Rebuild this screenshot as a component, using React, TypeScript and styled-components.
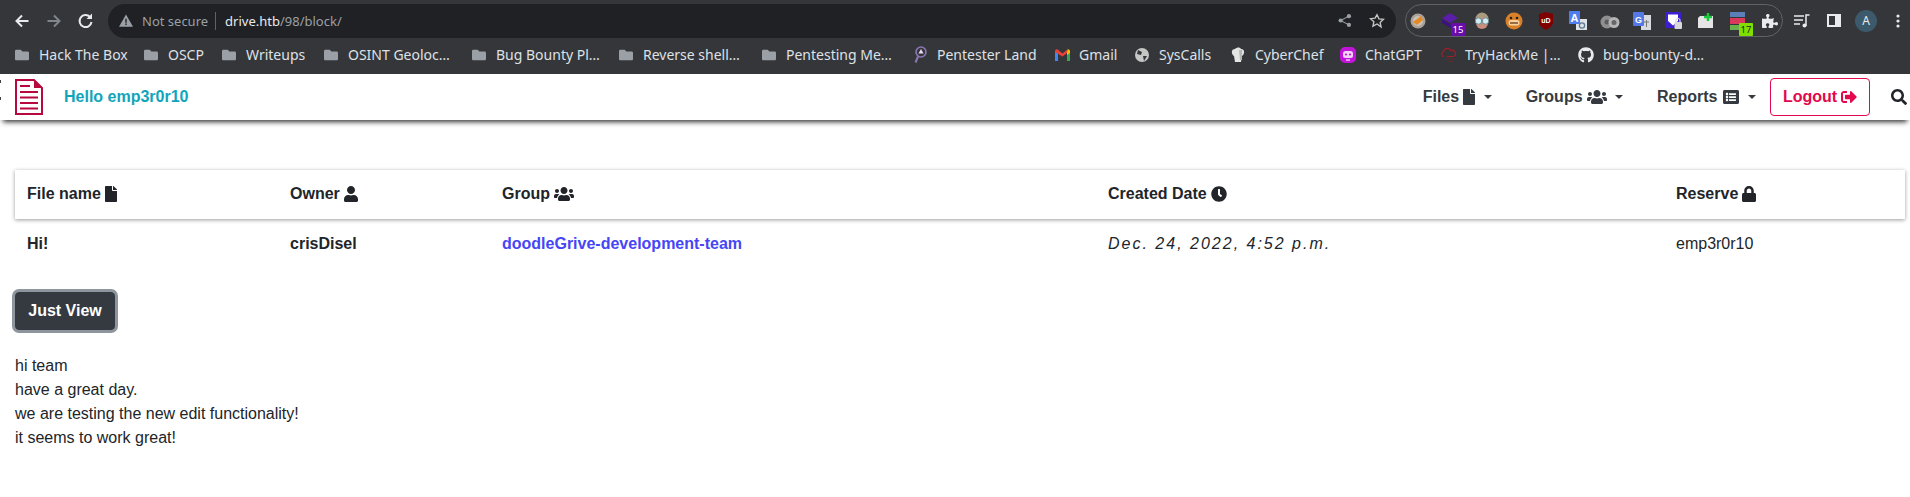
import React from "react";
import styled, { createGlobalStyle } from "styled-components";
import {
  FaFile,
  FaUsers,
  FaUser,
  FaClock,
  FaLock,
  FaListAlt,
  FaSignOutAlt,
  FaSearch,
  FaGithub,
  FaPuzzlePiece,
  FaFolder,
} from "react-icons/fa";

const GlobalStyle = createGlobalStyle`
  html, body {
    margin: 0;
    background: #fff;
    font-family: "Liberation Sans", Arial, sans-serif;
    color: #212529;
    font-size: 16px;
    overflow: hidden;
  }
`;

const Chrome = styled.div`
  background: #35363a;
  height: 74px;
  display: flex;
  flex-direction: column;
  font-family: "Noto Sans", sans-serif;
`;

const Toolbar = styled.div`
  height: 41px;
  display: flex;
  align-items: center;
  padding-left: 12px;
`;

const NavGlyph = styled.svg`
  width: 20px;
  height: 20px;
  margin-right: 12px;
  flex: none;
`;

const Omnibox = styled.div`
  width: 1288px;
  height: 34px;
  border-radius: 17px;
  background: #202124;
  display: flex;
  align-items: center;
  padding-left: 11px;
  box-sizing: border-box;
  flex: none;
`;

const Secure = styled.span`
  color: #9aa0a6;
  font-size: 13px;
  margin-left: 9px;
  padding-right: 7px;
  border-right: 1px solid #5f6368;
  line-height: 18px;
`;

const Host = styled.span`
  color: #e8eaed;
  margin-left: 9px;
  font-size: 13px;
`;

const Path = styled.span`
  color: #9aa0a6;
  font-size: 13px;
`;

const OmniActions = styled.div`
  margin-left: auto;
  display: flex;
  gap: 17px;
  align-items: center;
  padding-right: 11px;
`;

const Extensions = styled.div`
  margin-left: 9px;
  width: 378px;
  height: 33px;
  box-sizing: border-box;
  border: 1px solid #5f6368;
  border-radius: 17px;
  display: flex;
  align-items: center;
  flex: none;
`;

const ExtSlot = styled.div`
  width: 24px;
  height: 24px;
  display: flex;
  align-items: center;
  justify-content: center;
  position: relative;
  flex: none;
  margin-right: 8px;

  &:last-child {
    margin-right: 0;
  }
`;

const Badge = styled.span<{ $bg: string; $fg: string }>`
  position: absolute;
  right: -3px;
  bottom: -3px;
  width: 14px;
  height: 13px;
  background: ${({ $bg }) => $bg};
  color: ${({ $fg }) => $fg};
  border-radius: 1px;
  font-size: 9.5px;
  line-height: 13px;
  text-align: center;
`;

const RightTools = styled.div`
  display: flex;
  align-items: center;
  margin-left: 11px;
`;

const SideGlyph = styled.svg`
  margin-left: 17px;
`;

const Avatar = styled.div`
  width: 22px;
  height: 22px;
  border-radius: 50%;
  background: #3c5a6b;
  color: #e8eaed;
  font-size: 12px;
  line-height: 22px;
  text-align: center;
  margin-left: 14px;
`;

const DotsGlyph = styled.svg`
  margin-left: 19px;
`;

const Bookmarks = styled.div`
  height: 27px;
  display: flex;
  align-items: center;
  padding-left: 14px;
  color: #dee1e6;
  font-size: 14px;
`;

const Bookmark = styled.div<{ $w: number }>`
  width: ${({ $w }) => $w}px;
  display: flex;
  align-items: center;
  gap: 9px;
  white-space: nowrap;
  flex: none;
`;

const BookmarkIcon = styled.span`
  width: 16px;
  display: flex;
  justify-content: center;
  align-items: center;
  flex: none;
`;

const Nav = styled.nav`
  height: 46px;
  background: #fff;
  box-shadow: 0 5px 5px -3px rgba(0, 0, 0, 0.8);
  display: flex;
  align-items: center;
  position: relative;
  padding-left: 15px;
  font-weight: 700;
`;

const EdgeMarks = styled.span`
  position: absolute;
  left: 0;
  top: 6px;
  width: 1px;
  height: 3px;
  background: #444;
  box-shadow: 0 17px 0 #444;
`;

const Logo = styled.svg`
  flex: none;
`;

const Brand = styled.a`
  color: #11a5bb;
  margin-left: 21px;
`;

const NavRight = styled.div`
  margin-left: auto;
  display: flex;
  align-items: center;
`;

const NavItem = styled.a`
  display: flex;
  align-items: center;
  color: #343a40;
  gap: 4px;
  margin-right: 34px;
`;

const Caret = styled.span`
  width: 0;
  height: 0;
  margin-left: 4.5px;
  border-top: 4.8px solid #343a40;
  border-left: 4.8px solid transparent;
  border-right: 4.8px solid transparent;
`;

const Logout = styled.a`
  display: flex;
  align-items: center;
  gap: 4px;
  color: #e3074d;
  border: 1px solid #e3074d;
  border-radius: 4px;
  height: 38px;
  width: 100px;
  box-sizing: border-box;
  justify-content: center;
  margin-left: -20px;
`;

const SearchWrap = styled.span`
  display: flex;
  margin-left: 21px;
  margin-right: 3px;
  color: #212529;
`;

const FileIcon = styled(FaFile)`
  width: 12px;
  height: 16px;
`;

const UsersIcon = styled(FaUsers)`
  width: 20px;
  height: 16px;
`;

const UserIcon = styled(FaUser)`
  width: 14px;
  height: 16px;
`;

const ClockIcon = styled(FaClock)`
  width: 16px;
  height: 16px;
`;

const LockIcon = styled(FaLock)`
  width: 14px;
  height: 16px;
`;

const ReportIcon = styled(FaListAlt)`
  width: 18px;
  height: 16px;
`;

const LogoutIcon = styled(FaSignOutAlt)`
  width: 16px;
  height: 16px;
`;

const Main = styled.main`
  padding: 50px 5px 0 15px;
`;

const Row = styled.div`
  display: grid;
  grid-template-columns: 263px 212px 606px 568px 1fr;
`;

const HeadRow = styled(Row)`
  height: 49px;
  box-sizing: border-box;
  padding-bottom: 2px;
  align-items: center;
  box-shadow: 0 1px 4px rgba(0, 0, 0, 0.4);
`;

const BodyRow = styled(Row)`
  height: 50px;
  align-items: center;
`;

const Cell = styled.div<{ $bold?: boolean; $italic?: boolean }>`
  padding-left: 12px;
  display: flex;
  align-items: center;
  gap: 4px;
  font-weight: ${({ $bold }) => ($bold ? 700 : 400)};
  ${({ $italic }) => $italic && "font-style: italic; letter-spacing: 2px;"}
`;

const GroupLink = styled.a`
  color: #4646f5;
  font-weight: 700;
`;

const ViewButton = styled.button`
  display: block;
  margin-top: 23px;
  height: 38px;
  width: 100px;
  background: #343a40;
  color: #fff;
  border: 1px solid #343a40;
  border-radius: 4px;
  font: 700 16px "Liberation Sans", Arial, sans-serif;
  box-shadow: 0 0 0 3px rgba(130, 138, 145, 0.9);
`;

const Message = styled.div`
  margin-top: 24px;
  line-height: 24px;
`;

const Folder = () => <FaFolder size={14} color="#9aa0a6" />;

const bookmarks: { name: string; w: number; icon: React.ReactNode }[] = [
  { name: "Hack The Box", w: 129, icon: <Folder /> },
  { name: "OSCP", w: 78, icon: <Folder /> },
  { name: "Writeups", w: 102, icon: <Folder /> },
  { name: "OSINT Geoloc…", w: 148, icon: <Folder /> },
  { name: "Bug Bounty Pl…", w: 147, icon: <Folder /> },
  { name: "Reverse shell…", w: 143, icon: <Folder /> },
  { name: "Pentesting Me…", w: 151, icon: <Folder /> },
  {
    name: "Pentester Land",
    w: 142,
    icon: (
      <svg width="14" height="18" viewBox="0 0 14 18">
        <circle cx="8" cy="6" r="5" fill="#35363a" stroke="#8d78b5" strokeWidth="1.6" />
        <path d="M8 3 L10.5 7.5 H5.5z" fill="#ecdcf2" />
        <path d="M5 10.5 L2.5 16.5" stroke="#8d78b5" strokeWidth="2" />
      </svg>
    ),
  },
  {
    name: "Gmail",
    w: 80,
    icon: (
      <svg width="15" height="12" viewBox="0 0 15 12">
        <path d="M0 12V2L3 3v9z" fill="#4285f4" />
        <path d="M12 12V3l3-1v10z" fill="#34a853" />
        <path d="M0 1.5 L2 0 L7.5 4.5 L13 0 L12 4 L7.5 7.5 L0 3z" fill="#ea4335" />
        <path d="M12 3 L13 0 L15 1.5 V4 L12 6z" fill="#fbbc04" />
      </svg>
    ),
  },
  {
    name: "SysCalls",
    w: 96,
    icon: (
      <svg width="14" height="14" viewBox="0 0 14 14">
        <circle cx="7" cy="7" r="7" fill="#c4c7c5" />
        <path d="M3 2 L7 4 L6 7 L2 6z M8 8 L12 8 L9 13z" fill="#35363a" />
      </svg>
    ),
  },
  {
    name: "CyberChef",
    w: 110,
    icon: (
      <svg width="14" height="15" viewBox="0 0 14 15">
        <path d="M3 9 C0 7 0 2 4 2 C6 0 9 0 10 2 C14 2 14 7 11 9 L10 15 L4 15z" fill="#e4e4e4" />
        <path d="M8 3 H11 V13 H9z" fill="#b5b5b5" />
      </svg>
    ),
  },
  {
    name: "ChatGPT",
    w: 100,
    icon: (
      <svg width="16" height="16" viewBox="0 0 16 16">
        <rect width="16" height="16" rx="5" fill="#c015d8" />
        <rect x="3" y="4" width="10" height="7" rx="2.5" fill="#f3d2f8" />
        <circle cx="6" cy="7.5" r="1.1" fill="#c015d8" />
        <circle cx="10" cy="7.5" r="1.1" fill="#c015d8" />
        <path d="M6 13h4" stroke="#f3d2f8" strokeWidth="1.4" />
      </svg>
    ),
  },
  {
    name: "TryHackMe |…",
    w: 138,
    icon: (
      <svg width="16" height="16" viewBox="0 0 16 16">
        <path d="M3.5 10 A3 3 0 0 1 3.5 4.5 A4 4 0 0 1 11 3.5 A3 3 0 0 1 13.5 9.5 H7" fill="none" stroke="#a11d2a" strokeWidth="1.2" />
        <path d="M5 12 L13 12 M8 14.5 L13 14.5" stroke="#5e2a30" strokeWidth="1" />
      </svg>
    ),
  },
  { name: "bug-bounty-d…", w: 140, icon: <FaGithub size={16} color="#e8eaed" /> },
];

const App = () => (
  <>
    <GlobalStyle />
    <Chrome>
      <Toolbar>
        <NavGlyph viewBox="0 0 20 20">
          <path d="M16.5 10H5M10 4.5L4.5 10l5.5 5.5" fill="none" stroke="#e8eaed" strokeWidth="2" />
        </NavGlyph>
        <NavGlyph viewBox="0 0 20 20">
          <path d="M3.5 10H15M10 4.5l5.5 5.5-5.5 5.5" fill="none" stroke="#80868b" strokeWidth="2" />
        </NavGlyph>
        <NavGlyph viewBox="0 0 20 20">
          <path d="M15.5 11a6 6 0 1 1-1.5-5" fill="none" stroke="#e8eaed" strokeWidth="2" />
          <path d="M16 2.5V8h-5.5z" fill="#e8eaed" />
        </NavGlyph>
        <Omnibox>
          <svg width="14" height="13" viewBox="0 0 16 14">
            <path d="M8 0L16 14H0z" fill="#9aa0a6" />
            <path d="M7.2 5h1.6v4.5H7.2zM7.2 10.5h1.6V12H7.2z" fill="#202124" />
          </svg>
          <Secure>Not secure</Secure>
          <Host>drive.htb</Host>
          <Path>/98/block/</Path>
          <OmniActions>
            <svg width="14" height="15" viewBox="0 0 16 16">
              <circle cx="12.5" cy="3" r="2.4" fill="#9aa0a6" />
              <circle cx="12.5" cy="13" r="2.4" fill="#9aa0a6" />
              <circle cx="3" cy="8" r="2.4" fill="#9aa0a6" />
              <path d="M12.5 3L3 8l9.5 5" fill="none" stroke="#9aa0a6" strokeWidth="1.2" />
            </svg>
            <svg width="16" height="16" viewBox="0 0 24 24">
              <path d="M12 2.5l2.9 6.2 6.8.8-5 4.6 1.4 6.7L12 16.5l-6.1 3.3 1.4-6.7-5-4.6 6.8-.8z" fill="none" stroke="#c4c7c5" strokeWidth="2" />
            </svg>
          </OmniActions>
        </Omnibox>
        <Extensions>
          <ExtSlot>
            <svg width="16" height="16" viewBox="0 0 16 16">
              <circle cx="8" cy="8" r="7.5" fill="#a8a29a" />
              <circle cx="8" cy="8" r="5" fill="#c9c2b8" />
              <path d="M3 9 L11 3 L13 7 L7 12z" fill="#e58a22" />
            </svg>
          </ExtSlot>
          <ExtSlot>
            <svg width="18" height="16" viewBox="0 0 18 16">
              <path d="M9 0l8 5-8 5-8-5z" fill="#5a1ea8" />
              <path d="M1 6l8 5 3 2v3L1 10z" fill="#3c1280" />
            </svg>
            <Badge $bg="#6a0dad" $fg="#fff">15</Badge>
          </ExtSlot>
          <ExtSlot>
            <svg width="18" height="18" viewBox="0 0 18 18">
              <circle cx="9" cy="7" r="6.5" fill="#a99b7d" />
              <circle cx="9" cy="11" r="6" fill="#c98f7c" />
              <circle cx="5.5" cy="9" r="3.2" fill="#cfeef3" stroke="#6d8a92" />
              <circle cx="12.5" cy="9" r="3.2" fill="#cfeef3" stroke="#6d8a92" />
            </svg>
          </ExtSlot>
          <ExtSlot>
            <svg width="18" height="18" viewBox="0 0 18 18">
              <circle cx="9" cy="9" r="8.5" fill="#d9802a" />
              <rect x="3.5" y="8" width="11" height="5.5" rx="2.5" fill="#f6cf9a" />
              <circle cx="6" cy="6" r="1.3" fill="#222" />
              <circle cx="12" cy="6" r="1.3" fill="#222" />
              <path d="M5 11h8" stroke="#5b2c10" strokeWidth="1.2" />
            </svg>
          </ExtSlot>
          <ExtSlot>
            <svg width="16" height="18" viewBox="0 0 16 18">
              <path d="M1 2 L8 0 L15 2 V10 C15 14 11 16 8 18 C5 16 1 14 1 10z" fill="#800000" />
              <text x="8" y="11" fontSize="7" fontWeight="700" fill="#fff" textAnchor="middle" fontFamily="Liberation Sans">uD</text>
            </svg>
          </ExtSlot>
          <ExtSlot>
            <svg width="18" height="20" viewBox="0 0 18 20">
              <rect x="7" y="8" width="11" height="11" fill="#dfe3e8" />
              <rect x="0" y="0" width="11" height="13" fill="#4f7df0" />
              <text x="5.5" y="10.5" fontSize="11" fontWeight="700" fill="#fff" textAnchor="middle" fontFamily="Liberation Sans">A</text>
              <circle cx="13" cy="14.5" r="2.6" fill="none" stroke="#5d7a93" strokeWidth="1.3" />
            </svg>
          </ExtSlot>
          <ExtSlot>
            <svg width="20" height="16" viewBox="0 0 20 16">
              <circle cx="7" cy="9" r="6.5" fill="#8f8f8f" />
              <circle cx="7" cy="9" r="2.5" fill="#5c5c5c" />
              <circle cx="14" cy="9.5" r="5.5" fill="#b4b4b4" />
              <circle cx="14" cy="9.5" r="2.5" fill="#666" />
            </svg>
          </ExtSlot>
          <ExtSlot>
            <svg width="18" height="18" viewBox="0 0 18 18">
              <rect x="8" y="3" width="10" height="15" fill="#d7dade" />
              <path d="M11 10h5M13.5 8v7" stroke="#777" />
              <rect x="0" y="0" width="11" height="14" rx="1" fill="#5578e8" />
              <text x="5.5" y="10.5" fontSize="9" fontWeight="700" fill="#fff" textAnchor="middle" fontFamily="Liberation Sans">G</text>
            </svg>
          </ExtSlot>
          <ExtSlot>
            <svg width="18" height="18" viewBox="0 0 18 18">
              <rect x="0" y="0" width="16" height="16" rx="1" fill="#3d1fd1" />
              <path d="M3 2.5h10v6.5l-5 4.5-5-4.5z" fill="#fff" />
              <path d="M11 10V8.5a2 2 0 0 1 4 0V10" fill="none" stroke="#d8d8d8" strokeWidth="1.2" />
              <rect x="9.5" y="10" width="7.5" height="7" rx="1" fill="#d8d8d8" />
            </svg>
          </ExtSlot>
          <ExtSlot>
            <svg width="18" height="16" viewBox="0 0 18 16">
              <path d="M1 5l2-2h13v12H1z" fill="#e4e4e4" />
              <path d="M11 0v8M7 4h8" stroke="#19c93c" strokeWidth="2.5" />
            </svg>
          </ExtSlot>
          <ExtSlot>
            <svg width="18" height="20" viewBox="0 0 18 20">
              <rect x="1" y="1" width="15" height="5" fill="#5b7fb8" />
              <rect x="1" y="7" width="15" height="6" fill="#d93a5c" />
              <rect x="1" y="14" width="15" height="5" fill="#6ab04c" />
            </svg>
            <Badge $bg="#7fe000" $fg="#222">17</Badge>
          </ExtSlot>
          <ExtSlot>
            <FaPuzzlePiece size={16} color="#e8eaed" />
          </ExtSlot>
        </Extensions>
        <RightTools>
          <svg width="16" height="14" viewBox="0 0 16 14">
            <path d="M0 2h10M0 6h9M0 10h6" stroke="#e8eaed" strokeWidth="1.4" />
            <path d="M12 12V1h3.5" fill="none" stroke="#e8eaed" strokeWidth="1.5" />
            <circle cx="10.5" cy="11.5" r="2" fill="#e8eaed" />
          </svg>
          <SideGlyph width="14" height="13" viewBox="0 0 14 13">
            <rect x="1" y="1" width="12" height="11" fill="none" stroke="#e8eaed" strokeWidth="2" />
            <rect x="8" y="1" width="5" height="11" fill="#e8eaed" />
          </SideGlyph>
          <Avatar>A</Avatar>
          <DotsGlyph width="4" height="14" viewBox="0 0 4 14">
            <circle cx="2" cy="2" r="1.6" fill="#e8eaed" />
            <circle cx="2" cy="7" r="1.6" fill="#e8eaed" />
            <circle cx="2" cy="12" r="1.6" fill="#e8eaed" />
          </DotsGlyph>
        </RightTools>
      </Toolbar>
      <Bookmarks>
        {bookmarks.map((b) => (
          <Bookmark key={b.name} $w={b.w}>
            <BookmarkIcon>{b.icon}</BookmarkIcon>
            {b.name}
          </Bookmark>
        ))}
      </Bookmarks>
    </Chrome>
    <Nav>
      <EdgeMarks />
      <Logo width="28" height="36" viewBox="0 0 28 36">
        <path d="M1 1h18l8 8v26H1z" fill="#fff" stroke="#b8093f" strokeWidth="2" />
        <path d="M19 1v8h8z" fill="#b8093f" />
        <path d="M5 7h10M5 13h18M5 18.5h18M5 24h18M5 29.5h18" stroke="#b8093f" strokeWidth="2" />
      </Logo>
      <Brand>Hello emp3r0r10</Brand>
      <NavRight>
        <NavItem>
          Files <FileIcon />
          <Caret />
        </NavItem>
        <NavItem>
          Groups <UsersIcon />
          <Caret />
        </NavItem>
        <NavItem>
          Reports <ReportIcon />
          <Caret />
        </NavItem>
        <Logout>
          Logout <LogoutIcon />
        </Logout>
        <SearchWrap>
          <FaSearch size={16} />
        </SearchWrap>
      </NavRight>
    </Nav>
    <Main>
      <HeadRow>
        <Cell $bold>File name <FileIcon /></Cell>
        <Cell $bold>Owner <UserIcon /></Cell>
        <Cell $bold>Group <UsersIcon /></Cell>
        <Cell $bold>Created Date <ClockIcon /></Cell>
        <Cell $bold>Reserve <LockIcon /></Cell>
      </HeadRow>
      <BodyRow>
        <Cell $bold>Hi!</Cell>
        <Cell $bold>crisDisel</Cell>
        <Cell><GroupLink>doodleGrive-development-team</GroupLink></Cell>
        <Cell $italic>Dec. 24, 2022, 4:52 p.m.</Cell>
        <Cell>emp3r0r10</Cell>
      </BodyRow>
      <ViewButton>Just View</ViewButton>
      <Message>
        hi team
        <br />
        have a great day.
        <br />
        we are testing the new edit functionality!
        <br />
        it seems to work great!
      </Message>
    </Main>
  </>
);

export default App;
